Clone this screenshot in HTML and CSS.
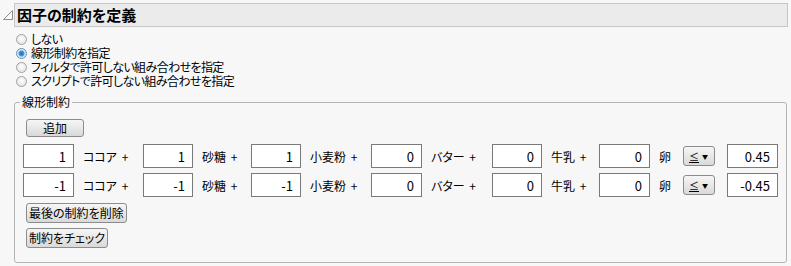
FILE: index.html
```html
<!DOCTYPE html>
<html lang="ja">
<head>
  <meta charset="UTF-8">
  <title>因子の制約を定義</title>
  <link rel="stylesheet" href="styles.css">
</head>
<body>
  <div class="title-row">
    <svg class="disclosure" viewBox="0 0 10 10" width="10" height="10">
      <polygon points="0.5,9.5 9.5,0.5 9.5,9.5" fill="#fafafa" stroke="#8c8c8c" stroke-width="1"/>
    </svg>
    <div class="title-bar"><h1>因子の制約を定義</h1></div>
  </div>

  <div class="radio-list">
    <label class="radio"><span class="dot"></span>しない</label>
    <label class="radio checked"><span class="dot"></span>線形制約を指定</label>
    <label class="radio"><span class="dot"></span>フィルタで許可しない組み合わせを指定</label>
    <label class="radio"><span class="dot"></span>スクリプトで許可しない組み合わせを指定</label>
  </div>

  <fieldset class="group">
    <legend>線形制約</legend>
    <button class="btn btn-add">追加</button>
    <div class="terms">
      <input class="num" value="1" readonly><span class="term">ココア +</span>
      <input class="num" value="1" readonly><span class="term">砂糖 +</span>
      <input class="num" value="1" readonly><span class="term">小麦粉 +</span>
      <input class="num" value="0" readonly><span class="term">バター +</span>
      <input class="num" value="0" readonly><span class="term">牛乳 +</span>
      <input class="num" value="0" readonly><span class="term">卵</span>
      <div class="op"><u>≤</u><span class="caret">▼</span></div>
      <input class="num" value="0.45" readonly>

      <input class="num" value="-1" readonly><span class="term">ココア +</span>
      <input class="num" value="-1" readonly><span class="term">砂糖 +</span>
      <input class="num" value="-1" readonly><span class="term">小麦粉 +</span>
      <input class="num" value="0" readonly><span class="term">バター +</span>
      <input class="num" value="0" readonly><span class="term">牛乳 +</span>
      <input class="num" value="0" readonly><span class="term">卵</span>
      <div class="op"><u>≤</u><span class="caret">▼</span></div>
      <input class="num" value="-0.45" readonly>
    </div>
    <div class="actions">
      <button class="btn">最後の制約を削除</button>
      <button class="btn">制約をチェック</button>
    </div>
  </fieldset>
</body>
</html>
```

FILE: styles.css
```css
* { box-sizing: border-box; }
body {
  margin: 0;
  background: #f7f7f7;
  color: #000;
  font-family: "Noto Sans CJK JP", "Noto Sans", sans-serif;
  font-size: 12px;
  font-feature-settings: "palt" 1;
}
.title-row {
  display: flex;
  align-items: center;
  padding: 3px 3px 0 3px;
}
.disclosure {
  width: 10px;
  height: 10px;
  margin-right: 1px;
}
.title-bar {
  flex: 1;
  height: 24px;
  display: flex;
  align-items: center;
  padding-left: 2px;
  background: #ebebeb;
  border: 1px solid #c6c6c6;
}
.title-bar h1 {
  margin: 0;
  font-size: 15px;
  font-weight: bold;
  line-height: 20px;
}
.radio-list {
  padding: 5px 0 0 16px;
}
.radio {
  display: flex;
  align-items: center;
  gap: 4px;
  height: 14px;
  line-height: 14px;
  letter-spacing: -0.6px;
}
.dot {
  width: 11px;
  height: 11px;
  border-radius: 50%;
  border: 1px solid #a0a0a0;
  background: radial-gradient(circle at 50% 40%, #ffffff, #dcdcdc);
}
.radio.checked .dot {
  border-color: #6f8ea8;
  background: radial-gradient(circle, #1f6fb8 0, #3c98dc 2.5px, #cfe6f7 3.5px, #eef4f8 100%);
}
.group {
  margin: 7px 4px 0 14px;
  padding: 10px 8px 14px 8px;
  border: 1px solid #b4b4b4;
  border-radius: 3px;
  min-width: 0;
}
.group legend {
  margin-left: -3px;
  padding: 0 2px;
  line-height: 14px;
}
.btn {
  display: block;
  margin-left: 3px;
  height: 20px;
  padding: 0 2px;
  font: inherit;
  font-size: 12px;
  line-height: 16px;
  color: #000;
  background: linear-gradient(#f6f6f6, #d9d9d9);
  border: 1px solid #8c8c8c;
  border-radius: 3px;
}
.btn-add {
  width: 58px;
  height: 18px;
}
.terms {
  display: grid;
  grid-template-columns: 51px 69px 50px 58px 50px 70px 51px 70px 50px 57px 51px 33px 44px 51px;
  align-items: center;
  row-gap: 5px;
  margin-top: 7px;
}
.num {
  width: 100%;
  height: 24px;
  padding: 0 7px 0 2px;
  text-align: right;
  font-family: "Noto Sans CJK JP", "Noto Sans", sans-serif;
  font-size: 13px;
  color: #000;
  background: #fff;
  border: 1px solid #7a7a7a;
  border-radius: 0;
  outline: none;
}
.term {
  padding-left: 9px;
  white-space: nowrap;
  word-spacing: 2px;
}
.op {
  width: 32px;
  height: 20px;
  display: flex;
  align-items: center;
  justify-content: space-between;
  padding: 0 6px 0 5px;
  background: linear-gradient(#f6f6f6, #d9d9d9);
  border: 1px solid #8c8c8c;
  border-radius: 3px;
  font-size: 10px;
}
.caret {
  font-size: 6px;
}
.actions {
  display: flex;
  flex-direction: column;
  align-items: flex-start;
  gap: 5px;
  margin-top: 6px;
}
```
